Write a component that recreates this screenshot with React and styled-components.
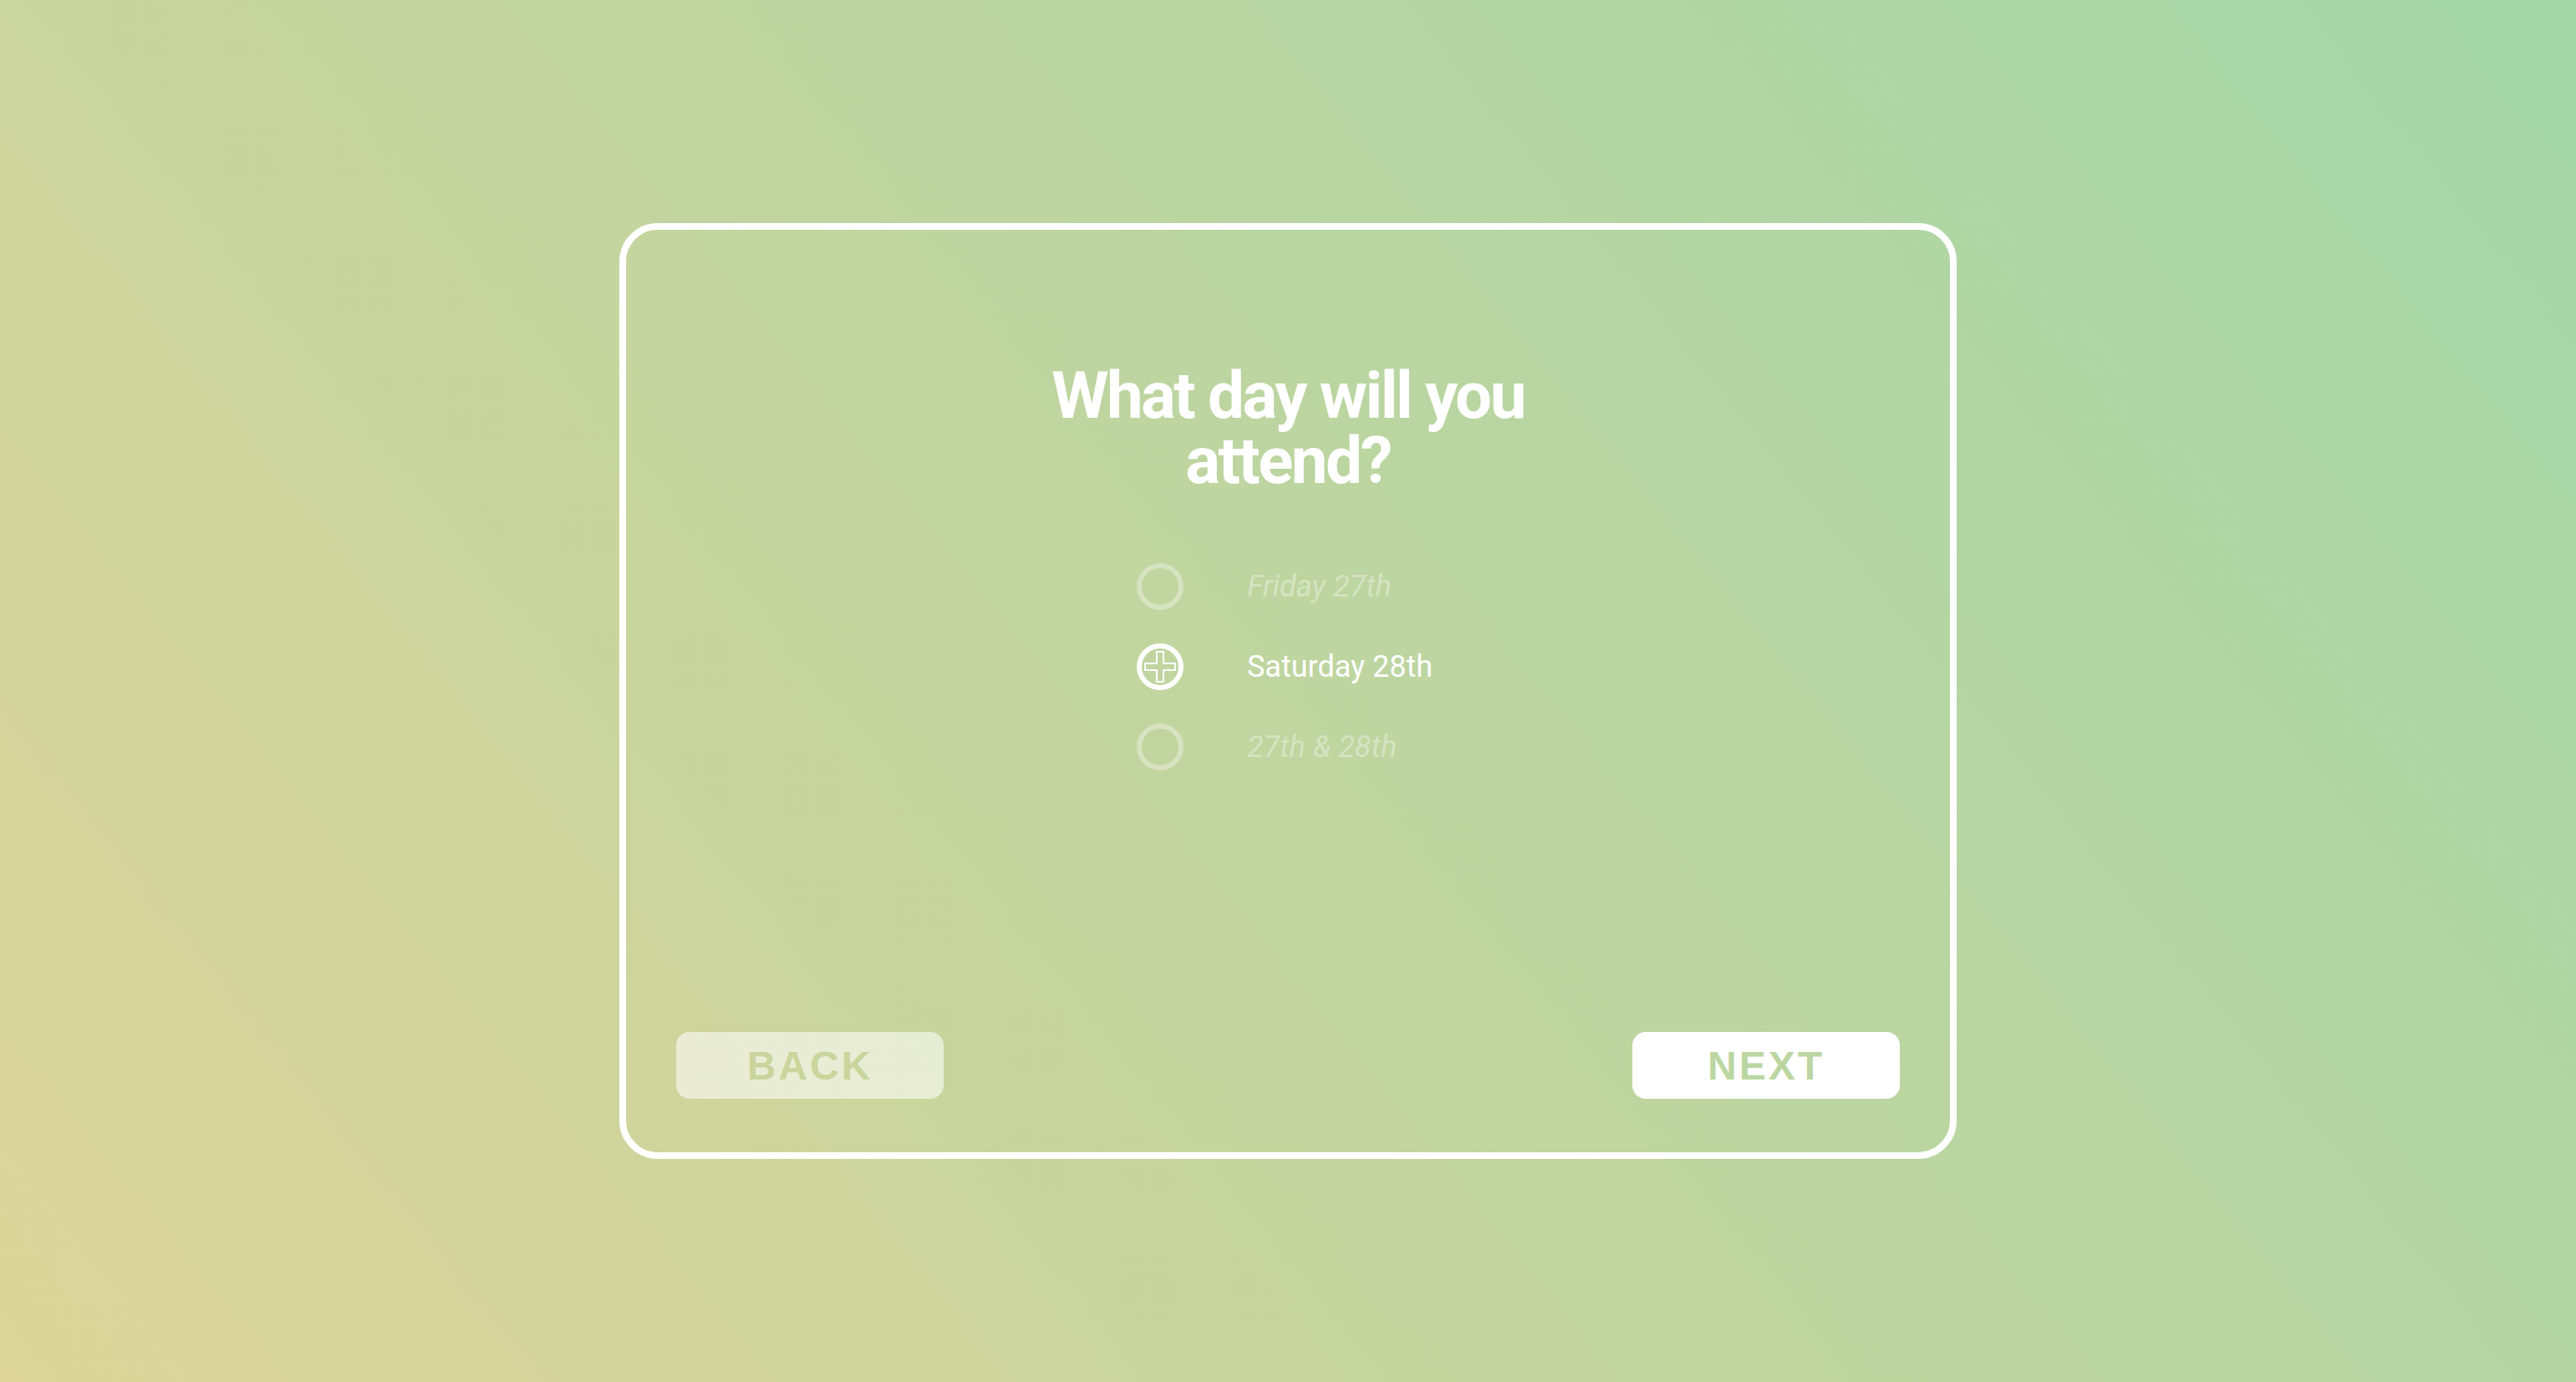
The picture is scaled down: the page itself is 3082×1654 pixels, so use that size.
import React from "react"
import styled, { createGlobalStyle } from "styled-components"

const GlobalStyle = createGlobalStyle`
  html, body, #root {
    margin: 0;
    padding: 0;
    height: 100%;
  }
  body {
    font-family: Roboto, "Liberation Sans", sans-serif;
  }
`

const options = [
  { id: "fri", label: "Friday 27th" },
  { id: "sat", label: "Saturday 28th" },
  { id: "both", label: "27th & 28th" }
]

const App = () => {
  const selected = "sat"

  return (
    <Page>
      <GlobalStyle />
      <Card>
        <Title>What day will you attend?</Title>
        <OptionList>
          {options.map((option) => {
            const active = option.id === selected
            return (
              <Option key={option.id}>
                <Radio active={active}>
                  {active && <PlusMark />}
                </Radio>
                <Label active={active}>{option.label}</Label>
              </Option>
            )
          })}
        </OptionList>
        <Footer>
          <NavButton variant="back">BACK</NavButton>
          <NavButton variant="next">NEXT</NavButton>
        </Footer>
      </Card>
    </Page>
  )
}

const PlusMark = () => (
  <svg width="40" height="40" viewBox="0 0 40 40">
    <path
      d="M16 2 H24 V16 H38 V24 H24 V38 H16 V24 H2 V16 H16 Z"
      fill="none"
      stroke="#fff"
      strokeWidth="2"
    />
  </svg>
)

export default App

const Page = styled.div`
  min-height: 100vh;
  display: flex;
  align-items: center;
  justify-content: center;
  background: linear-gradient(51deg, #dcd499 0%, #a3d6a7 100%);
`

const Card = styled.div`
  box-sizing: border-box;
  width: 1600px;
  height: 1120px;
  border: 8px solid #fff;
  border-radius: 46px;
  display: flex;
  flex-direction: column;
  align-items: center;
`

const Title = styled.h1`
  margin: 160px 0 0;
  max-width: 640px;
  font-family: Roboto, "Liberation Sans", sans-serif;
  font-weight: 700;
  font-size: 78px;
  line-height: 78px;
  letter-spacing: -2.5px;
  color: #fff;
  text-align: center;
`

const OptionList = styled.div`
  margin: 63px 8px 0 0;
  display: flex;
  flex-direction: column;
`

const Option = styled.div`
  height: 96px;
  display: flex;
  align-items: center;
  gap: 76px;
`

const Radio = styled.div`
  box-sizing: border-box;
  width: 56px;
  height: 56px;
  border-radius: 50%;
  border: 6px solid ${(p) => (p.active ? "#fff" : "rgba(255, 255, 255, 0.35)")};
  display: flex;
  align-items: center;
  justify-content: center;
`

const Label = styled.span`
  font-family: Roboto, "Liberation Sans", sans-serif;
  font-size: 36px;
  font-style: ${(p) => (p.active ? "normal" : "italic")};
  color: ${(p) => (p.active ? "#fff" : "rgba(255, 255, 255, 0.36)")};
`

const Footer = styled.div`
  box-sizing: border-box;
  width: 100%;
  margin-top: auto;
  padding: 0 60px 64px;
  display: flex;
  justify-content: space-between;
`

const NavButton = styled.button`
  width: 320px;
  height: 80px;
  border: none;
  border-radius: 16px;
  padding: 0;
  font-family: "Liberation Sans", Arial, sans-serif;
  font-weight: 700;
  font-size: 48px;
  letter-spacing: 3px;
  background: ${(p) => (p.variant === "back" ? "rgba(255, 255, 255, 0.56)" : "#fff")};
  color: ${(p) => (p.variant === "back" ? "#c9d59c" : "#bcd6a2")};
  cursor: pointer;
`
